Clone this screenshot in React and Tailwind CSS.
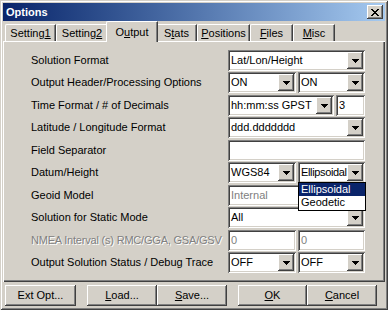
const RAISED = 'shadow-[inset_-1px_-1px_0_#404040,inset_1px_1px_0_#ffffff,inset_-2px_-2px_0_#808080,inset_2px_2px_0_#d4d0c8]'
const SUNKEN = 'shadow-[inset_1px_1px_0_#808080,inset_-1px_-1px_0_#ffffff,inset_2px_2px_0_#404040,inset_-2px_-2px_0_#d4d0c8]'

const TABS = [
  { label: 'Setting', key: '1', after: '', w: 'w-[51px]' },
  { label: 'Setting', key: '2', after: '', w: 'w-[52px]' },
  { label: 'O', key: 'u', after: 'tput', w: 'w-[48px]', active: true },
  { label: 'S', key: 't', after: 'ats', w: 'w-[41px]' },
  { label: '', key: 'P', after: 'ositions', w: 'w-[53px]' },
  { label: '', key: 'F', after: 'iles', w: 'w-[43px]' },
  { label: '', key: 'M', after: 'isc', w: 'w-[42px]' },
]

function Arrow() {
  return (
    <div className={`w-[16px] h-full bg-[#d4d0c8] flex items-center justify-center shrink-0 ${RAISED}`}>
      <svg width="7" height="4" viewBox="0 0 7 4" shapeRendering="crispEdges">
        <path d="M0 0h7v1H6v1H5v1H4v1H3V3H2V2H1V1H0z" fill="#000" />
      </svg>
    </div>
  )
}

function Combo({ w, value, tight }) {
  return (
    <div className={`${w} h-[21px] bg-white p-[2px] flex ${SUNKEN}`}>
      <div
        className={`flex-1 pl-[1px] leading-[17px] whitespace-nowrap overflow-hidden ${tight ? 'tracking-[-0.35px]' : ''}`}
      >
        {value}
      </div>
      <Arrow />
    </div>
  )
}

function Edit({ w, value, disabled }) {
  return (
    <div className={`${w} h-[21px] bg-white p-[2px] ${SUNKEN}`}>
      <div className={`pl-[1px] leading-[17px] ${disabled ? 'text-[#808080]' : ''}`}>{value}</div>
    </div>
  )
}

function Row({ label, h, disabled, children }) {
  return (
    <div className={`flex ${h}`}>
      <div
        className={`w-[197px] h-[21px] leading-[21px] whitespace-nowrap ${disabled ? 'text-[#808080] tracking-[-0.2px] [text-shadow:1px_1px_0_#ffffff]' : ''}`}
      >
        {label}
      </div>
      <div className="flex gap-[2px]">{children}</div>
    </div>
  )
}

function Button({ w, ml, children }) {
  return (
    <div className={`${w} ${ml} h-[21px] bg-[#d4d0c8] flex items-center justify-center ${RAISED}`}>
      {children}
    </div>
  )
}

export default function App() {
  return (
    <div
      className="w-[388px] h-[310px] bg-[#d4d0c8] p-[3px] flex flex-col text-[11px] text-black shadow-[inset_1px_1px_0_#d4d0c8,inset_-1px_-1px_0_#404040,inset_2px_2px_0_#ffffff,inset_-2px_-2px_0_#808080]"
      style={{ fontFamily: '"Liberation Sans", Arial, sans-serif' }}
    >
      {/* title bar */}
      <div className="h-[18px] bg-linear-to-r from-[#0a246a] to-[#a6caf0] flex items-center justify-between pl-[3px] pr-[2px]">
        <span className="text-white font-bold">Options</span>
        <div className={`w-[16px] h-[14px] bg-[#d4d0c8] flex items-center justify-center ${RAISED}`}>
          <svg width="8" height="7" viewBox="0 0 8 7" shapeRendering="crispEdges">
            <path d="M0 0h2v1h1v1h2V1h1V0h2v1H7v1H6v1H5v1h1v1h1v1h1v1H6V6H5V5H3v1H2v1H0V6h1V5h1V4h1V3H2V2H1V1H0z" fill="#000" />
          </svg>
        </div>
      </div>

      {/* tabs */}
      <div className="h-[20px] flex items-end pl-[2px] relative z-10">
        {TABS.map((t, i) =>
          t.active ? (
            <div
              key={i}
              className="w-[52px] -mx-[2px] h-[21px] -mb-[1px] bg-[#d4d0c8] border-l border-t border-white rounded-tl-[2px] border-r border-r-[#404040] shadow-[inset_-1px_0_0_#808080] text-center pt-[2px] relative"
            >
              {t.label}
              <span className="underline">{t.key}</span>
              {t.after}
            </div>
          ) : (
            <div
              key={i}
              className={`${t.w} h-[17px] bg-[#d4d0c8] border-l border-t border-white rounded-tl-[2px] border-r border-r-[#404040] shadow-[inset_-1px_0_0_#808080] text-center leading-[16px]`}
            >
              {t.label}
              <span className="underline">{t.key}</span>
              {t.after}
            </div>
          )
        )}
      </div>

      {/* panel */}
      <div className="h-[241px] relative pt-[9px] pl-[28px] shadow-[inset_1px_1px_0_#ffffff,inset_-1px_-1px_0_#404040,inset_-2px_-2px_0_#808080]">
        <Row label="Solution Format" h="h-[22px]">
          <Combo w="w-[137px]" value="Lat/Lon/Height" />
        </Row>
        <Row label="Output Header/Processing Options" h="h-[23px]">
          <Combo w="w-[68px]" value="ON" />
          <Combo w="w-[67px]" value="ON" />
        </Row>
        <Row label="Time Format / # of Decimals" h="h-[22px]">
          <Combo w="w-[106px]" value="hh:mm:ss GPST" />
          <Edit w="w-[29px]" value="3" />
        </Row>
        <Row label="Latitude / Longitude Format" h="h-[23px]">
          <Combo w="w-[137px]" value="ddd.ddddddd" />
        </Row>
        <Row label="Field Separator" h="h-[22px]">
          <Edit w="w-[137px]" value="" />
        </Row>
        <Row label="Datum/Height" h="h-[23px]">
          <Combo w="w-[68px]" value="WGS84" />
          <Combo w="w-[67px]" value="Ellipsoidal" tight />
        </Row>
        <Row label="Geoid Model" h="h-[22px]">
          <Edit w="w-[137px]" value="Internal" disabled />
        </Row>
        <Row label="Solution for Static Mode" h="h-[23px]">
          <Combo w="w-[137px]" value="All" />
        </Row>
        <Row label="NMEA Interval (s) RMC/GGA, GSA/GSV" h="h-[22px]" disabled>
          <Edit w="w-[68px]" value="0" disabled />
          <Edit w="w-[67px]" value="0" disabled />
        </Row>
        <Row label="Output Solution Status / Debug Trace" h="h-[23px]">
          <Combo w="w-[68px]" value="OFF" />
          <Combo w="w-[67px]" value="OFF" />
        </Row>

        {/* open dropdown list */}
        <div className="absolute left-[295px] top-[141px] w-[68px] h-[29px] bg-white border border-black z-20">
          <div className="h-[13px] leading-[13px] bg-[#0a246a] text-white pl-[2px]">Ellipsoidal</div>
          <div className="h-[13px] leading-[13px] pl-[2px]">Geodetic</div>
        </div>
      </div>

      {/* buttons */}
      <div className="flex mt-[3px]">
        <Button w="w-[71px]" ml="ml-[2px]">Ext Opt...</Button>
        <Button w="w-[70px]" ml="ml-[11px]">
          <span><span className="underline">L</span>oad...</span>
        </Button>
        <Button w="w-[70px]" ml="ml-0">
          <span><span className="underline">S</span>ave...</span>
        </Button>
        <Button w="w-[69px]" ml="ml-[11px]">
          <span><span className="underline">O</span>K</span>
        </Button>
        <Button w="w-[70px]" ml="ml-0">
          <span><span className="underline">C</span>ancel</span>
        </Button>
      </div>
    </div>
  )
}
